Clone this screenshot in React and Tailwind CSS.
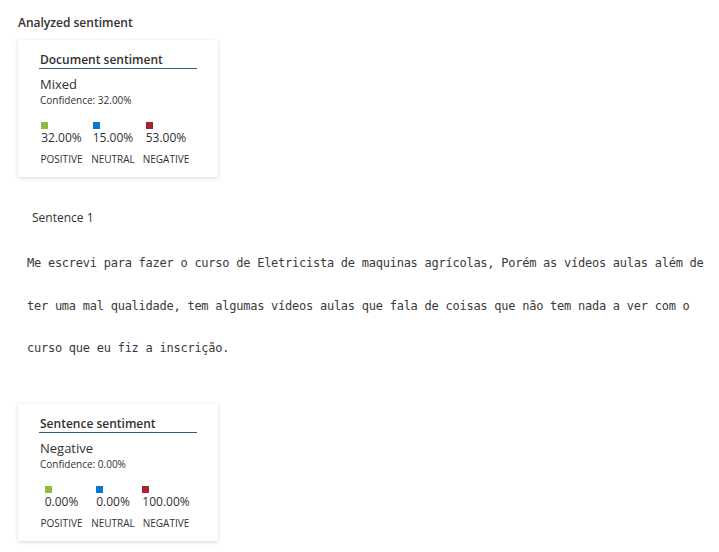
export default function App() {
  const sans = { fontFamily: '"Open Sans", "Noto Sans", sans-serif' };
  const Card = ({ title, label, confidence, values }) => (
    <div className="ml-[18px] w-[200px] h-[137px] bg-white shadow-[0_1px_4px_rgba(0,0,0,0.16)] pt-[12px] pl-[22px]">
      <div className="w-[158px] -ml-px pl-px border-b border-[#2b5f7f] text-[12px] leading-[15px] font-semibold text-[#323130] pb-px">
        {title}
      </div>
      <div className="mt-[6px] text-[13px] leading-[18px] text-[#323130]">{label}</div>
      <div className="text-[10px] leading-[14px] text-[#323130]">Confidence: {confidence}</div>
      <div className="flex mt-[15px] -ml-[4px]">
        {values.map((v, i) => (
          <div key={i} className={"flex flex-col items-center " + ["w-[51px]", "w-[52px]", "w-[54px]"][i]}>
            <div className="flex flex-col items-start">
              <div className={"w-[7px] h-[7px] " + ["bg-[#8cbd3f]", "bg-[#0b78d0]", "bg-[#a4262c]"][i]} />
              <div className="mt-px text-[12px] leading-[16px] text-[#323130]">{v}</div>
            </div>
            <div className="mt-[6px] text-[10px] leading-[14px] text-[#323130] whitespace-nowrap">
              {["POSITIVE", "NEUTRAL", "NEGATIVE"][i]}
            </div>
          </div>
        ))}
      </div>
    </div>
  );
  return (
    <div className="w-[719px] h-[552px] bg-white overflow-hidden" style={sans}>
      <div className="pt-[15px] pl-[18px] text-[12px] leading-[16px] font-semibold text-[#323130]">Analyzed sentiment</div>
      <div className="mt-[9px]">
        <Card title="Document sentiment" label="Mixed" confidence="32.00%" values={["32.00%", "15.00%", "53.00%"]} />
      </div>
      <div className="mt-[32px] pl-[32px] text-[12px] leading-[18px] text-[#323130]">Sentence 1</div>
      <div
        className="mt-[15px] pl-[27px] text-[12px] leading-[42.5px] text-[#3a3a3a] tracking-[-0.25px] whitespace-pre"
        style={{ fontFamily: '"DejaVu Sans Mono", "Liberation Mono", monospace' }}
      >
        <div>Me escrevi para fazer o curso de Eletricista de maquinas agrícolas, Porém as vídeos aulas além de</div>
        <div>ter uma mal qualidade, tem algumas vídeos aulas que fala de coisas que não tem nada a ver com o</div>
        <div>curso que eu fiz a inscrição.</div>
      </div>
      <div className="mt-[34px]">
        <Card title="Sentence sentiment" label="Negative" confidence="0.00%" values={["0.00%", "0.00%", "100.00%"]} />
      </div>
    </div>
  );
}
